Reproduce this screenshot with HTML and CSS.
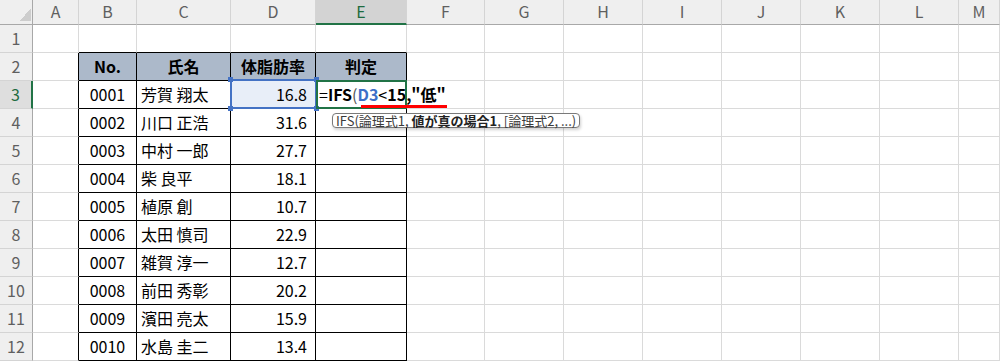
FILE: index.html
```html
<!DOCTYPE html>
<html lang="ja">
<head>
  <meta charset="UTF-8"/>
  <title>IFS 関数</title>
  <link rel="stylesheet" href="styles.css">
</head>
<body>
<div class="sheet">
  <div class="row head">
    <div class="corner"></div><div>A</div><div>B</div><div>C</div><div>D</div><div class="on">E</div><div>F</div><div>G</div><div>H</div><div>I</div><div>J</div><div>K</div><div>L</div><div>M</div>
  </div>
  <div class="row">
    <div class="rh">1</div><div></div><div class="ab"></div><div class="ab"></div><div class="ab"></div><div class="ab"></div><div></div><div></div><div></div><div></div><div></div><div></div><div></div><div></div>
  </div>
  <div class="row">
    <div class="rh">2</div><div class="lt"></div><div class="t th">No.</div><div class="t th">氏名</div><div class="t th">体脂肪率</div><div class="t th">判定</div><div></div><div></div><div></div><div></div><div></div><div></div><div></div><div></div>
  </div>
  <div class="row">
    <div class="rh on">3</div><div class="lt"></div><div class="t c">0001</div><div class="t">芳賀 翔太</div>
    <div class="t n sel">16.8<span class="hd h1"></span><span class="hd h2"></span><span class="hd h3"></span><span class="hd h4"></span></div>
    <div class="t edit">
      <span class="f">=<b>IFS</b><i>(</i><b class="ref">D3</b>&lt;<b>15,"低"</b></span>
      <span class="mark"></span>
      <span class="tip">IFS(論理式1, <b>値が真の場合1</b>, [論理式2, ...)</span>
    </div>
    <div></div><div></div><div></div><div></div><div></div><div></div><div></div><div></div>
  </div>
  <div class="row">
    <div class="rh">4</div><div class="lt"></div><div class="t c">0002</div><div class="t">川口 正浩</div><div class="t n">31.6</div><div class="t"></div><div></div><div></div><div></div><div></div><div></div><div></div><div></div><div></div>
  </div>
  <div class="row">
    <div class="rh">5</div><div class="lt"></div><div class="t c">0003</div><div class="t">中村 一郎</div><div class="t n">27.7</div><div class="t"></div><div></div><div></div><div></div><div></div><div></div><div></div><div></div><div></div>
  </div>
  <div class="row">
    <div class="rh">6</div><div class="lt"></div><div class="t c">0004</div><div class="t">柴 良平</div><div class="t n">18.1</div><div class="t"></div><div></div><div></div><div></div><div></div><div></div><div></div><div></div><div></div>
  </div>
  <div class="row">
    <div class="rh">7</div><div class="lt"></div><div class="t c">0005</div><div class="t">植原 創</div><div class="t n">10.7</div><div class="t"></div><div></div><div></div><div></div><div></div><div></div><div></div><div></div><div></div>
  </div>
  <div class="row">
    <div class="rh">8</div><div class="lt"></div><div class="t c">0006</div><div class="t">太田 慎司</div><div class="t n">22.9</div><div class="t"></div><div></div><div></div><div></div><div></div><div></div><div></div><div></div><div></div>
  </div>
  <div class="row">
    <div class="rh">9</div><div class="lt"></div><div class="t c">0007</div><div class="t">雑賀 淳一</div><div class="t n">12.7</div><div class="t"></div><div></div><div></div><div></div><div></div><div></div><div></div><div></div><div></div>
  </div>
  <div class="row">
    <div class="rh">10</div><div class="lt"></div><div class="t c">0008</div><div class="t">前田 秀彰</div><div class="t n">20.2</div><div class="t"></div><div></div><div></div><div></div><div></div><div></div><div></div><div></div><div></div>
  </div>
  <div class="row">
    <div class="rh">11</div><div class="lt"></div><div class="t c">0009</div><div class="t">濱田 亮太</div><div class="t n">15.9</div><div class="t"></div><div></div><div></div><div></div><div></div><div></div><div></div><div></div><div></div>
  </div>
  <div class="row">
    <div class="rh">12</div><div class="lt"></div><div class="t c">0010</div><div class="t">水島 圭二</div><div class="t n">13.4</div><div class="t"></div><div></div><div></div><div></div><div></div><div></div><div></div><div></div><div></div>
  </div>
</div>
</body>
</html>
```

FILE: styles.css
```css
* { margin : 0; padding : 0; box-sizing : border-box; }

body { background : #fff; color : #000; font : 16px/1.2 "Noto Sans CJK JP", "Noto Sans", sans-serif; overflow : hidden; }

/* ========== grid ========== */
.sheet { width : 1000px; }

.row { display : grid; grid-template-columns : 33px 46px 58px 94px 85px 91px 78px repeat(6, 79px) 41px; height : 28px; }
.row > div { display : flex; align-items : center; padding : 0 4px; white-space : nowrap; border-right : 1px solid #dadada; border-bottom : 1px solid #dadada; }

/* column / row headers */
.head { height : 25px; background : #efefef; }
.head > div { justify-content : center; color : #5f5f5f; border-right-color : #d4d4d4; border-bottom-color : #a8a8a8; }
.head .corner { border-right-color : #a8a8a8; background : linear-gradient(to bottom right, transparent 50%, #cdcdcd 50%) 20px 8px / 11px 13px no-repeat, #efefef; }
.head .on { background : #d3d3d3; color : #1e6b3f; border-bottom : 2px solid #217346; }

.row .rh { justify-content : center; padding : 0; background : #efefef; color : #5f5f5f; border-right-color : #a8a8a8; border-bottom-color : #d4d4d4; }
.row .rh.on { background : #dedede; color : #1e6b3f; border-right : 2px solid #217346; }

/* table B2:E12 */
.row .t { border-right-color : #000; border-bottom-color : #000; }
.row .lt { border-right-color : #000; }
.row .ab { border-bottom-color : #000; }
.row .th { justify-content : center; background : #acb9ca; font-weight : bold; }
.row .c { justify-content : center; }
.row .n { justify-content : flex-end; padding-right : 8px; }

/* D3 reference */
.row .sel { position : relative; z-index : 1; background : #e8eef8; }
.sel::before { content : ""; position : absolute; top : -2px; left : -1px; right : -2px; bottom : -1px; border : 2px solid #4472c4; }
.hd { position : absolute; width : 5px; height : 5px; background : #4472c4; }
.h1 { top : -4px; left : -3px; }
.h2 { top : -4px; right : -4px; }
.h3 { bottom : -3px; left : -3px; }
.h4 { bottom : -3px; right : -4px; }

/* E3 edit */
.row .edit { position : relative; z-index : 2; padding-left : 3px; overflow : visible; }
.edit::before { content : ""; position : absolute; top : -1px; left : 0; right : -1px; bottom : -1px; border : 2px solid #217346; }
.f { align-self : stretch; display : flex; align-items : center; padding-right : 4px; background : #fff; font-size : 16px; }
.f b { font-weight : bold; }
.f i { font-style : normal; color : #555; }
.ref { color : #3c6fc8; }
.mark { position : absolute; left : 45px; top : 24px; width : 86px; height : 3px; background : #f00; z-index : 1; }
.tip { position : absolute; left : 16px; top : 32px; height : 15px; padding : 0 3px; font-size : 13px; line-height : 13px; color : #3a3a3a; background : #fff; border : 1px solid #7a7a7a; border-radius : 4px; box-shadow : 1px 2px 3px rgba(0, 0, 0, 0.18); }
.tip b { color : #222; }
```
